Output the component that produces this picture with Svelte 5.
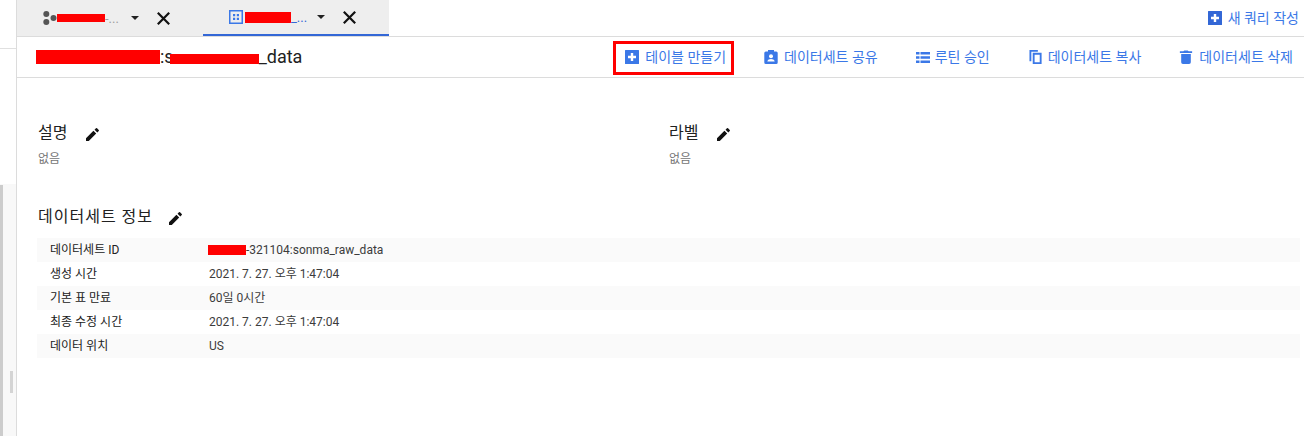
<script>
  const rows = [
    ['데이터세트 ID', null],
    ['생성 시간', '2021. 7. 27. 오후 1:47:04'],
    ['기본 표 만료', '60일 0시간'],
    ['최종 수정 시간', '2021. 7. 27. 오후 1:47:04'],
    ['데이터 위치', 'US']
  ];
</script>

{#snippet plus()}
  <svg class="ic plus" viewBox="0 0 14 14"><path fill="currentColor" d="M.5 0h13a.5.5 0 0 1 .5.5v13a.5.5 0 0 1-.5.5H.5a.5.5 0 0 1-.5-.5V.5A.5.5 0 0 1 .5 0z"/><path fill="#fff" d="M5.800 3h2.400v2.800H11v2.400H8.200V11H5.800V8.200H3V5.800h2.800z"/></svg>
{/snippet}
{#snippet pencil()}
  <svg class="pen" viewBox="0 0 14 14"><path fill="#111" d="M0 11v3h3l8-8-3-3zM13.700 3.300a.9.9 0 0 0 0-1.200L11.900.3a.9.9 0 0 0-1.200 0L9.200 1.800l3 3z"/></svg>
{/snippet}
{#snippet close()}
  <svg class="x" viewBox="0 0 13 13"><path fill="none" stroke="#111" stroke-width="2.200" d="M.8.8l11.400 11.400M12.200.8L.8 12.200"/></svg>
{/snippet}

<div class="page">
  <aside class="side">
    <div class="side-top"></div>
    <div class="side-mid"></div>
    <div class="side-low">
      <div class="rail"></div>
      <div class="thumb"></div>
    </div>
  </aside>
  <main class="main">
    <header class="tabbar">
      <div class="tabs">
        <div class="tab first">
          <svg class="nodes" viewBox="0 0 14 14"><circle cx="3.300" cy="3" r="3" fill="#555"/><circle cx="3.300" cy="11" r="3" fill="#555"/><circle cx="10.500" cy="7" r="3" fill="#555"/></svg>
          <span class="name n1"><span class="mask m1"></span><span class="tail">-...</span></span>
          <span class="caret"></span>
          {@render close()}
        </div>
        <div class="tab active">
          <svg class="grid" viewBox="0 0 14 14"><path fill="#3b78e7" fill-rule="evenodd" d="M0 0h14v14H0zM1.500 1.500v11h11v-11z"/><path fill="#3b78e7" d="M4 4h2.200v2.200H4zM7.800 4H10v2.200H7.800zM4 7.800h2.200V10H4zM7.800 7.800H10V10H7.800z"/></svg>
          <span class="name n2"><span class="mask m2"></span><span class="tail blue">_...</span></span>
          <span class="caret"></span>
          {@render close()}
        </div>
      </div>
      <a class="newq">{@render plus()}<span>새 쿼리 작성</span></a>
    </header>
    <section class="toolbar">
      <h1 class="title"><span class="mask m3"></span>:s<span class="mask m4"></span>_data</h1>
      <nav class="actions">
        <a class="act boxed">{@render plus()}<span>테이블 만들기</span></a>
        <a class="act share">
          <svg class="ic" viewBox="0 0 14 14"><path fill="#3b78e7" d="M4 0h6v1.500h2.200A1.500 1.500 0 0 1 13.700 3v9.500a1.500 1.500 0 0 1-1.500 1.500H1.800a1.500 1.500 0 0 1-1.500-1.500V3a1.500 1.500 0 0 1 1.500-1.500H4z"/><circle cx="7" cy="6.200" r="2" fill="#fff"/><path fill="#fff" d="M3.300 11.500c0-1.700 2.300-2.500 3.700-2.500s3.700.8 3.700 2.500z"/></svg>
          <span>데이터세트 공유</span>
        </a>
        <a class="act routine">
          <svg class="ic wide" viewBox="0 0 14 11"><path fill="#3b78e7" d="M0 0h3.500v2.400H0zM4.500 0H14v2.400H4.500zM0 4.300h3.500v2.400H0zM4.500 4.300H14v2.400H4.500zM0 8.600h3.500V11H0zM4.500 8.600H14V11H4.500z"/></svg>
          <span>루틴 승인</span>
        </a>
        <a class="act copy">
          <svg class="ic" viewBox="0 0 14 15"><path fill="#3b78e7" d="M0 0h9v2H2v10H0z"/><path fill="#3b78e7" fill-rule="evenodd" d="M3.500 3H13v12H3.500zM5.500 5v8H11V5z"/></svg>
          <span>데이터세트 복사</span>
        </a>
        <a class="act last">
          <svg class="ic" viewBox="0 0 14 16"><path fill="#3b78e7" d="M1.500 4.500h11V14a2 2 0 0 1-2 2h-7a2 2 0 0 1-2-2zM0 1.500h4L5 .5h4l1 1h4v2H0z"/></svg>
          <span>데이터세트 삭제</span>
        </a>
      </nav>
    </section>
    <section class="body">
      <div class="cols">
        <div class="col">
          <h2 class="head">설명 {@render pencil()}</h2>
          <p class="none">없음</p>
        </div>
        <div class="col">
          <h2 class="head">라벨 {@render pencil()}</h2>
          <p class="none">없음</p>
        </div>
      </div>
      <h2 class="head info">데이터세트 정보 {@render pencil()}</h2>
      <div class="table">
        {#each rows as [k, v]}
          <div class="row">
            <div class="key">{k}</div>
            <div class="val">
              {#if v === null}<span class="mask m5"></span>-321104:sonma_raw_data{:else}{v}{/if}
            </div>
          </div>
        {/each}
      </div>
    </section>
  </main>
</div>

<style>
  :global(body) { margin: 0; background: #fff; }
  .page {
    display: flex;
    width: 1304px;
    height: 436px;
    overflow: hidden;
    font-family: Roboto, "Noto Sans CJK KR", sans-serif;
    color: #212121;
  }
  .side {
    flex: 0 0 17px;
    box-sizing: border-box;
    border-right: 1px solid #dcdcdc;
    display: flex;
    flex-direction: column;
  }
  .side-top { height: 48px; border-bottom: 1px solid #e0e0e0; }
  .side-mid { height: 135px; }
  .side-low { flex: 1; background: #f8f8f8; position: relative; }
  .rail { position: absolute; left: 0; top: 1px; bottom: 0; width: 3px; background: #cccccc; }
  .thumb { position: absolute; left: 10px; top: 187px; width: 3px; height: 22px; background: #d4d4d4; }
  .main { flex: 1; min-width: 0; display: flex; flex-direction: column; }
  .tabbar {
    height: 37px;
    box-sizing: border-box;
    border-bottom: 1px solid #dcdcdc;
    display: flex;
    justify-content: space-between;
  }
  .tabs { display: flex; }
  .tab {
    width: 186px;
    height: 36px;
    box-sizing: border-box;
    background: #eeeeee;
    display: flex;
    align-items: center;
    padding-left: 26px;
    font-size: 13px;
    color: #9e9e9e;
  }
  .tab.active { border-bottom: 2px solid #3367d6; }
  .nodes { width: 14px; height: 14px; flex: none; }
  .grid { width: 14px; height: 14px; margin-right: 2px; flex: none; }
  .name { display: flex; align-items: center; flex: none; }
  .n1 { width: 74px; }
  .n2 { width: 72px; }
  .mask { display: inline-block; background: #f00; flex: none; }
  .m1 { width: 48px; height: 8px; }
  .m2 { width: 46px; height: 11px; }
  .m3 { width: 124px; height: 14px; }
  .m4 { width: 89px; height: 10px; margin: 4px 0 0 -4px; }
  .m5 { width: 38px; height: 10px; margin-left: -1px; }
  .blue { color: #3367d6; }
  .caret {
    width: 0; height: 0; flex: none;
    border-left: 4px solid transparent;
    border-right: 4px solid transparent;
    border-top: 4px solid #212121;
  }
  .x { width: 13px; height: 13px; margin-left: 18px; flex: none; }
  .newq {
    display: flex;
    align-items: center;
    gap: 6px;
    font-size: 14px;
    line-height: 20px;
    color: #3b78e7;
    padding-right: 5px;
    height: 36px;
  }
  .newq .plus { color: #3367d6; }
  .ic { width: 14px; height: 14px; flex: none; }
  .wide { height: 11px; }
  .toolbar {
    height: 41px;
    box-sizing: border-box;
    border-bottom: 1px solid #dcdcdc;
    display: flex;
    align-items: center;
    justify-content: space-between;
    padding-left: 19px;
  }
  .title { margin: 0; font-size: 18px; font-weight: 400; color: #212121; display: flex; align-items: center; line-height: 20px; }
  .actions { display: flex; align-items: center; }
  .act {
    display: flex;
    align-items: center;
    gap: 6px;
    font-size: 14px;
    line-height: 20px;
    color: #3b78e7;
    margin-left: 38px;
    white-space: nowrap;
  }
  .act.boxed {
    margin: 2px 0 0;
    height: 34px;
    box-sizing: border-box;
    border: 3px solid #f00;
    padding: 0 5px 2px 9px;
  }
  .act.share { margin-left: 30px; }
  .act.routine { gap: 5px; }
  .act.copy { margin-left: 39px; gap: 5px; }
  .act.last { padding-right: 11px; }
  .body { padding: 0 4px 0 21px; }
  .cols { display: flex; padding-top: 45px; }
  .col { width: 631px; }
  .head {
    margin: 0;
    font-size: 16px;
    font-weight: 400;
    color: #212121;
    line-height: 20px;
    display: flex;
    align-items: center;
    gap: 19px;
  }
  .pen { width: 13px; height: 13px; flex: none; margin-top: 2px; }
  .none { margin: 8px 0 0; font-size: 12px; line-height: 16px; color: #757575; }
  .info { margin-top: 40px; letter-spacing: 1px; gap: 16px; }
  .table { margin: 11px 0 0 -1px; }
  .row { display: flex; height: 24px; align-items: center; font-size: 12px; line-height: 16px; padding-left: 13px; }
  .row:nth-child(odd) { background: #fafafa; }
  .key { width: 159px; flex: none; }
  .val { display: flex; align-items: center; color: #3c3c3c; }
</style>
